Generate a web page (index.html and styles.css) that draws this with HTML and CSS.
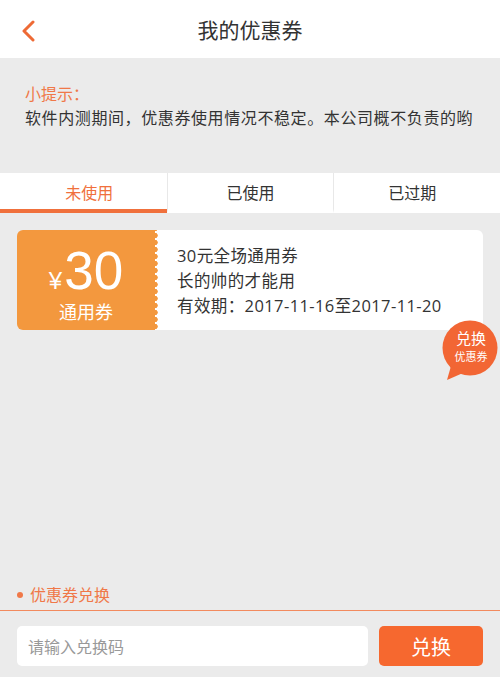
FILE: index.html
```html
<!DOCTYPE html>
<html lang="zh-CN">
<head>
    <meta charset="UTF-8">
    <meta name="viewport" content="width=device-width, initial-scale=1.0">
    <title>我的优惠券</title>
    <link rel="stylesheet" href="styles.css">
</head>
<body>
    <header class="topbar">
        <a class="back" href="#">
            <svg width="16" height="22" viewBox="0 0 16 22">
                <polyline points="13,2 4,11 13,20" fill="none" stroke="#ee6a35" stroke-width="3" stroke-linecap="round" stroke-linejoin="round"/>
            </svg>
        </a>
        <h1>我的优惠券</h1>
        <span></span>
    </header>

    <div class="tips">
        <p class="tips-title">小提示：</p>
        <p class="tips-text">软件内测期间，优惠券使用情况不稳定。本公司概不负责的哟</p>
    </div>

    <nav class="tabs">
        <a class="tab active" href="#">未使用</a>
        <a class="tab" href="#">已使用</a>
        <a class="tab last" href="#">已过期</a>
    </nav>

    <div class="list">
        <div class="coupon">
            <div class="coupon-left">
                <div class="price"><span class="yen">¥</span>30</div>
                <div class="kind">通用券</div>
            </div>
            <div class="coupon-right">
                <p>30元全场通用券</p>
                <p>长的帅的才能用</p>
                <p>有效期：2017-11-16至2017-11-20</p>
            </div>
            <div class="badge">
                <svg class="badge-bg" width="60" height="64" viewBox="0 0 60 64">
                    <circle cx="31" cy="28" r="27.5" fill="#f26634"/>
                    <path d="M12 46 L8 60 L24 53 Z" fill="#f26634"/>
                </svg>
                <span class="badge-big">兑换</span>
                <span class="badge-small">优惠券</span>
            </div>
        </div>
    </div>

    <div class="redeem">
        <div class="redeem-title"><i class="dot"></i>优惠券兑换</div>
        <div class="redeem-row">
            <input type="text" placeholder="请输入兑换码">
            <button type="button">兑换</button>
        </div>
    </div>
</body>
</html>
```

FILE: styles.css
```css
body {
    margin: 0;
    height: 677px;
    display: flex;
    flex-direction: column;
    background: #ebebeb;
    font-family: "Noto Sans CJK SC", "Noto Sans", sans-serif;
    color: #333;
}
p {
    margin: 0;
}
.topbar {
    height: 58px;
    background: #fff;
    display: grid;
    grid-template-columns: 60px 1fr 60px;
    align-items: center;
}
.back {
    display: flex;
    padding-left: 20px;
    padding-top: 3px;
}
.topbar h1 {
    margin: 0;
    text-align: center;
    font-size: 21px;
    font-weight: normal;
    color: #333;
}
.tips {
    height: 115px;
    box-sizing: border-box;
    padding: 23px 25px 0;
    font-size: 16px;
    line-height: 24px;
}
.tips-title {
    color: #f07848;
}
.tips-text {
    letter-spacing: 0.6px;
}
.tabs {
    height: 40px;
    background: #fff;
    display: grid;
    grid-template-columns: 1fr 1fr 1fr;
}
.tab {
    display: flex;
    align-items: center;
    justify-content: center;
    color: #333;
    text-decoration: none;
    font-size: 16px;
    border-left: 1px solid #e8e8e8;
    border-bottom: 4px solid transparent;
    padding-top: 1px;
}
.tab:first-child {
    border-left: none;
    padding-left: 12px;
}
.tab.last {
    padding-right: 10px;
}
.tab.active {
    color: #f0703c;
    border-bottom-color: #f0703c;
}
.list {
    flex: 1;
    padding: 17px 17px 0;
}
.coupon {
    position: relative;
    display: flex;
    height: 100px;
}
.coupon-left {
    position: relative;
    width: 138px;
    box-sizing: border-box;
    padding-top: 5px;
    background: #f3983e;
    border-radius: 6px 0 0 6px;
    color: #fff;
    display: flex;
    flex-direction: column;
    align-items: center;
    justify-content: center;
    z-index: 1;
}
.coupon-left::after {
    content: "";
    position: absolute;
    left: 100%;
    top: 0;
    bottom: 0;
    width: 3px;
    background: radial-gradient(circle at 0 50%, #f3983e 2.4px, transparent 3px) 0 2px / 3px 7px repeat-y;
}
.price {
    font-family: "Liberation Sans", "Noto Sans CJK SC", sans-serif;
    font-size: 53px;
    line-height: 56px;
}
.yen {
    font-size: 24px;
    line-height: 1;
    margin-right: 2px;
}
.kind {
    font-size: 18px;
    line-height: 22px;
    margin-top: 1px;
}
.coupon-right {
    flex: 1;
    background: #fff;
    border-radius: 0 6px 6px 0;
    padding-left: 22px;
    display: flex;
    flex-direction: column;
    justify-content: center;
    font-family: "Open Sans", "Noto Sans CJK SC", sans-serif;
    font-size: 16.5px;
    line-height: 25px;
    letter-spacing: 0.4px;
}
.badge {
    position: absolute;
    right: -16px;
    top: 90px;
    width: 60px;
    height: 64px;
    display: flex;
    flex-direction: column;
    align-items: center;
    color: #fff;
    padding-left: 4px;
    box-sizing: border-box;
}
.badge-bg {
    position: absolute;
    left: 0;
    top: 0;
}
.badge-big {
    position: relative;
    font-size: 15px;
    line-height: 19px;
    margin-top: 8px;
}
.badge-small {
    position: relative;
    font-size: 11px;
    line-height: 15px;
    margin-top: 2px;
}
.redeem-title {
    height: 31px;
    line-height: 31px;
    border-bottom: 1px solid #f28a5e;
    padding-left: 17px;
    font-size: 16px;
    color: #f07848;
    display: flex;
    align-items: center;
}
.dot {
    width: 6px;
    height: 6px;
    border-radius: 50%;
    background: #f07848;
    margin-right: 7px;
}
.redeem-row {
    display: flex;
    gap: 11px;
    padding: 15px 17px 11px;
}
.redeem-row input {
    flex: 1;
    height: 40px;
    box-sizing: border-box;
    border: none;
    border-radius: 5px;
    background: #fff;
    padding: 0 11px;
    font-family: inherit;
    font-size: 16px;
    outline: none;
}
.redeem-row input::placeholder {
    color: #999;
}
.redeem-row button {
    width: 104px;
    height: 40px;
    border: none;
    border-radius: 5px;
    background: #f6682f;
    color: #fff;
    font-family: inherit;
    font-size: 20px;
}
```
